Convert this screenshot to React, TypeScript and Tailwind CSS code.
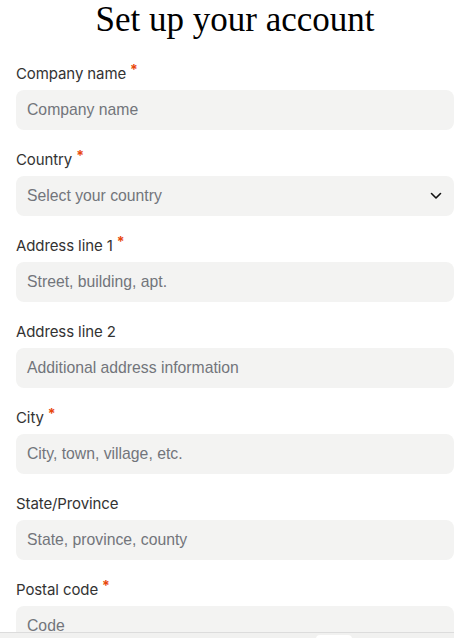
import React from "react";

const fields = [
  { label: "Company name", placeholder: "Company name", required: true },
  { label: "Country", placeholder: "Select your country", required: true, select: true },
  { label: "Address line 1", placeholder: "Street, building, apt.", required: true },
  { label: "Address line 2", placeholder: "Additional address information", required: false },
  { label: "City", placeholder: "City, town, village, etc.", required: true },
  { label: "State/Province", placeholder: "State, province, county", required: false },
  { label: "Postal code", placeholder: "Code", required: true },
];

const App = () => {
  return (
    <div className="w-[454px] h-[638px] overflow-hidden bg-white pl-4 relative">
      <h1 className="text-center text-[35px] leading-[40px] text-black font-['Liberation_Serif',serif] h-[63px]">
        Set up your account
      </h1>
      <div className="flex flex-col gap-[19px]">
        {fields.map((f) => (
          <div key={f.label} className="flex flex-col gap-[6px]">
            <label className="h-[21px] text-[15px] leading-[21px] text-[#333333] tracking-[-0.1px] font-['Inter',sans-serif] flex items-start">
              {f.label}
              {f.required && (
                <span className="ml-[4px] text-[#e8470c] text-[14px] leading-[14px] font-bold">*</span>
              )}
            </label>
            <div className="h-[40px] w-[438px] rounded-lg bg-[#f3f3f2] flex items-center justify-between pl-[11px] pr-[12px]">
              <span className="text-[15.75px] text-[#72757b] font-['Liberation_Sans',Arial,sans-serif]">
                {f.placeholder}
              </span>
              {f.select && (
                <svg width="12" height="8" viewBox="0 0 12 8" fill="none">
                  <path d="M1.5 1.5L6 6L10.5 1.5" stroke="#111" strokeWidth="1.6" strokeLinecap="round" strokeLinejoin="round" />
                </svg>
              )}
            </div>
          </div>
        ))}
      </div>
      <div className="absolute left-0 right-0 bottom-0 h-[6px] bg-[#f1f1f0] border-t border-[#dcdcdc]">
        <div className="absolute left-[316px] top-[2px] w-[36px] h-[6px] rounded-t-sm bg-white" />
      </div>
    </div>
  );
};

export default App;
